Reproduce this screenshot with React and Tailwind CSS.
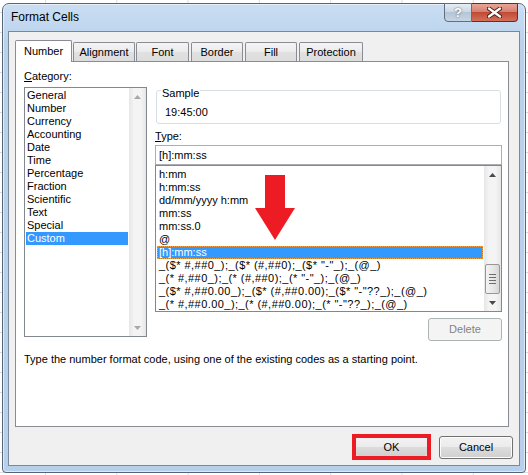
import clsx from "clsx";

const categories = [
  "General",
  "Number",
  "Currency",
  "Accounting",
  "Date",
  "Time",
  "Percentage",
  "Fraction",
  "Scientific",
  "Text",
  "Special",
  "Custom",
];

const types = [
  "h:mm",
  "h:mm:ss",
  "dd/mm/yyyy h:mm",
  "mm:ss",
  "mm:ss.0",
  "@",
  "[h]:mm:ss",
  '_($* #,##0_);_($* (#,##0);_($* "-"_);_(@_)',
  '_(* #,##0_);_(* (#,##0);_(* "-"_);_(@_)',
  '_($* #,##0.00_);_($* (#,##0.00);_($* "-"??_);_(@_)',
  '_(* #,##0.00_);_(* (#,##0.00);_(* "-"??_);_(@_)',
];

const tabs = [
  { label: "Alignment", cls: "w-[62px] ml-px" },
  { label: "Font", cls: "w-[53px] ml-px" },
  { label: "Border", cls: "w-[52px] ml-[2px]" },
  { label: "Fill", cls: "w-[52px] ml-[2px]" },
  { label: "Protection", cls: "w-[64px] ml-[2px]" },
];

function Arrow({ up, disabled }) {
  return (
    <svg width="7" height="4" viewBox="0 0 7 4">
      <polygon
        points={up ? "3.5,0 7,4 0,4" : "0,0 7,0 3.5,4"}
        fill={disabled ? "#a8a8a8" : "#4a4a4a"}
      />
    </svg>
  );
}

function ScrollBar({ thumb, disabled }) {
  return (
    <div className="w-[17px] flex flex-col bg-[linear-gradient(to_right,#e6e6e6,#f4f4f4_30%,#f4f4f4_70%,#e6e6e6)]">
      <div className="h-[17px] flex items-center justify-center">
        <Arrow up disabled={disabled} />
      </div>
      <div className="flex-1 flex flex-col justify-end">
        {thumb && (
          <div className="h-[30px] mx-px rounded-[2px] border border-[#979797] bg-[linear-gradient(to_right,#f3f3f3,#e6e6e6_60%,#d6d6d6)] flex flex-col items-center justify-center gap-[2px]">
            <div className="w-[7px] h-px bg-[#6c6c6c]" />
            <div className="w-[7px] h-px bg-[#6c6c6c]" />
            <div className="w-[7px] h-px bg-[#6c6c6c]" />
            <div className="w-[7px] h-px bg-[#6c6c6c]" />
          </div>
        )}
      </div>
      <div className="h-[17px] flex items-center justify-center">
        <Arrow disabled={disabled} />
      </div>
    </div>
  );
}

export default function App() {
  return (
    <div className="w-[528px] h-[475px] overflow-hidden bg-white bg-[linear-gradient(to_right,#dadcdd_1px,transparent_1px),linear-gradient(to_bottom,#dadcdd_1px,transparent_1px)] bg-[length:71.3px_20px] bg-[position:45px_12px] pt-[3px] pl-[2px] font-['Liberation_Sans',Arial,sans-serif] text-[11px] leading-[13px] text-black">
      <div className="relative w-[524px] h-[470px] rounded-t-[7px] rounded-b-[4px] border border-[#56657a] bg-[linear-gradient(to_bottom,#cadef3,#b9d2ec_40px,#b6cfea)] flex flex-col px-[5px] pb-[6px] shadow-[inset_0_0_0_1px_rgba(255,255,255,0.55)]">
        <div className="h-[27px] flex items-center pl-[3px]">
          <span className="text-[12px]">Format Cells</span>
        </div>
        <div className="absolute -top-px right-[7px] flex">
          <div className="w-[28px] h-[19px] rounded-bl-[4px] border border-[#5f6f84] bg-[linear-gradient(to_bottom,#e6edf4,#c9d6e3_50%,#b4c5d6_50%,#c7d6e4)] flex items-center justify-center text-[13px] font-bold text-white [text-shadow:0_0_2px_#3c4a5c]">
            ?
          </div>
          <div className="w-[46px] h-[19px] rounded-br-[4px] border border-l-0 border-[#6b2a22] bg-[linear-gradient(to_bottom,#e8a599,#d47c6c_50%,#c14a35_50%,#d2705a)] flex items-center justify-center">
            <svg width="15" height="11" viewBox="0 0 15 11">
              <path d="M2 1.5 L13 9.5 M13 1.5 L2 9.5" stroke="#3f1b14" strokeWidth="4.2" strokeLinecap="round" />
              <path d="M2 1.5 L13 9.5 M13 1.5 L2 9.5" stroke="#ffffff" strokeWidth="2.4" strokeLinecap="round" />
            </svg>
          </div>
        </div>

        <div className="flex-1 bg-[#f0f0f0] border border-[#7b8898] flex flex-col pt-[8px]">
          <div className="flex items-end h-[21px] ml-[6px]">
            <div className="relative z-10 w-[57px] h-[22px] -mb-px bg-white border border-b-0 border-[#898c95] rounded-t-[2px] flex items-center justify-center">
              Number
            </div>
            {tabs.map((t) => (
              <div
                key={t.label}
                className={clsx(
                  "h-[19px] border border-b-0 border-[#898c95] rounded-t-[2px] bg-[linear-gradient(to_bottom,#f4f4f4,#ebebeb_50%,#e1e1e1_50%,#dcdcdc)] flex items-center justify-center",
                  t.cls
                )}
              >
                {t.label}
              </div>
            ))}
          </div>

          <div className="ml-[6px] w-[494px] h-[366px] bg-white border border-[#898c95] pt-[8px] pl-[8px] pr-[6px]">
            <div className="flex gap-[8px]">
              <div className="w-[123px] flex flex-col">
                <div className="h-[13px]">
                  <span className="underline">C</span>ategory:
                </div>
                <div className="mt-[4px] h-[250px] border border-[#828790] flex">
                  <div className="flex-1 pt-px">
                    {categories.map((c) => (
                      <div
                        key={c}
                        className={clsx(
                          "h-[13px] mx-px pl-px whitespace-nowrap",
                          c === "Custom" && "bg-[#3399ff] text-white"
                        )}
                      >
                        {c}
                      </div>
                    ))}
                  </div>
                  <ScrollBar disabled />
                </div>
              </div>

              <div className="w-[347px] flex flex-col mt-[20px]">
                <div className="relative mx-px h-[34px] rounded-[3px] border border-[#d5dfe5] pt-[15px] pl-[8px]">
                  <span className="absolute -top-[4px] left-[4px] bg-white px-px">Sample</span>
                  19:45:00
                </div>
                <div className="mt-[6px] h-[13px]">
                  <span className="underline">T</span>ype:
                </div>
                <div className="mt-[2px] h-[20px] border border-[#abadb3] pl-[3px] flex items-center">
                  [h]:mm:ss
                </div>
                <div className="relative h-[147px] border border-[#828790] flex">
                  <div className="flex-1 pt-[2px] overflow-hidden">
                    {types.map((t, i) => (
                      <div
                        key={t}
                        className={clsx(
                          "h-[13px] mx-px pl-[2px] whitespace-nowrap",
                          i > 6 && "tracking-[0.45px]",
                          t === "[h]:mm:ss" &&
                            "bg-[#3399ff] text-white outline outline-1 outline-dotted outline-[#f0a040] -outline-offset-1"
                        )}
                      >
                        {t}
                      </div>
                    ))}
                  </div>
                  <ScrollBar thumb />
                  <svg
                    className="absolute left-[99px] top-[9px]"
                    width="41"
                    height="66"
                    viewBox="0 0 41 66"
                  >
                    <polygon points="10,0 30,0 30,33 40,33 20,65 0,33 10,33" fill="#ed1c24" />
                  </svg>
                </div>
                <div className="mt-[6px] flex justify-end">
                  <div className="w-[74px] h-[23px] rounded-[3px] border border-[#adb2b5] bg-[#f4f4f4] text-[#838383] flex items-center justify-center">
                    Delete
                  </div>
                </div>
              </div>
            </div>
            <div className="mt-[12px] whitespace-nowrap">
              Type the number format code, using one of the existing codes as a starting point.
            </div>
          </div>

          <div className="mt-[7px] mr-[6px] flex justify-end items-center gap-[8px]">
            <div className="w-[79px] h-[26px] border-[4px] border-[#ed1c24] bg-[#f0f0f0]">
              <div className="h-full rounded-[2px] bg-[linear-gradient(to_bottom,#f2f2f2,#ebebeb_50%,#dddddd_50%,#cfcfcf)] flex items-center justify-center">
                OK
              </div>
            </div>
            <div className="w-[74px] h-[23px] rounded-[3px] border border-[#707070] bg-[linear-gradient(to_bottom,#f2f2f2,#ebebeb_50%,#dddddd_50%,#cfcfcf)] shadow-[inset_0_0_0_1px_#fcfcfc] flex items-center justify-center">
              Cancel
            </div>
          </div>
        </div>
      </div>
    </div>
  );
}
